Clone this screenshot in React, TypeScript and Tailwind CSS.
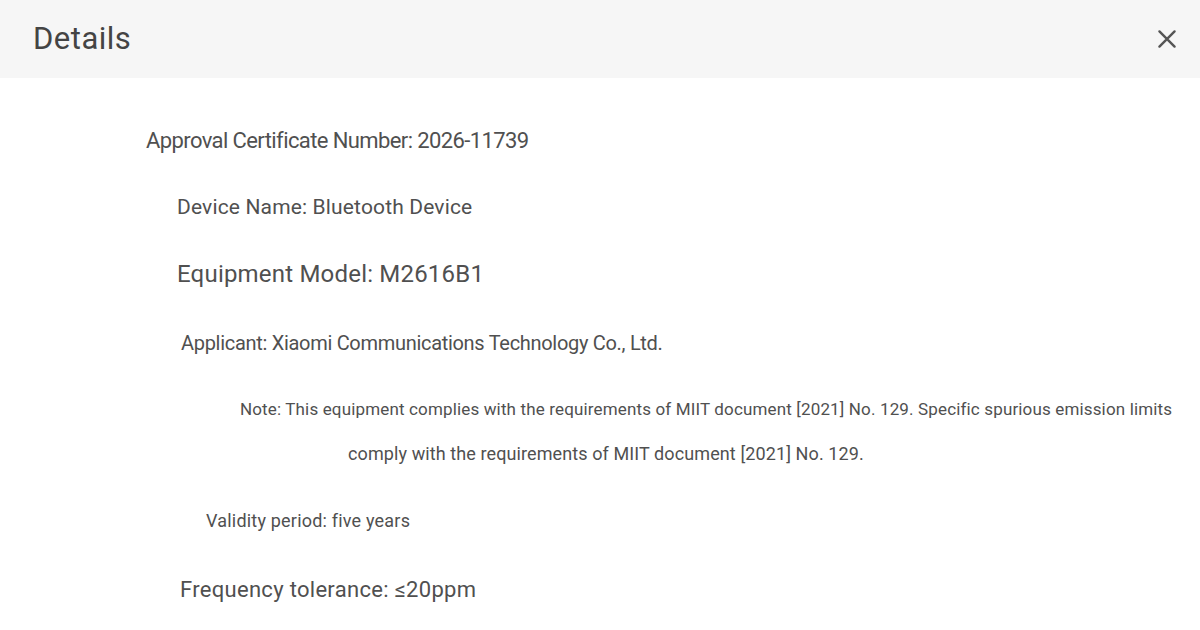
const font = { fontFamily: "Roboto, 'Noto Sans', sans-serif" };

export default function App() {
  return (
    <div className="w-[1200px] h-[630px] bg-white overflow-hidden" style={font}>
      <div className="h-[78px] bg-[#f6f6f6] flex items-center justify-between pl-[33px] pr-[20px]">
        <h1 className="text-[31px] text-[#444] tracking-[0.5px]">Details</h1>
        <svg width="26" height="26" viewBox="0 0 24 24" className="text-[#555]">
          <path d="M5 5l14 14M19 5L5 19" stroke="currentColor" strokeWidth="2.2" strokeLinecap="round" />
        </svg>
      </div>
      <div className="flex flex-col text-[#505050] whitespace-nowrap">
        <p className="mt-[48px] ml-[146px] leading-[30px] text-[22px] tracking-[-0.6px]">
          Approval Certificate Number: 2026-11739
        </p>
        <p className="mt-[36px] ml-[177px] leading-[30px] text-[21px] tracking-[0.15px]">
          Device Name: Bluetooth Device
        </p>
        <p className="mt-[37px] ml-[177px] leading-[30px] text-[24px] tracking-[0.2px]">
          Equipment Model: M2616B1
        </p>
        <p className="mt-[39px] ml-[181px] leading-[30px] text-[20px] tracking-[-0.3px]">
          Applicant: Xiaomi Communications Technology Co., Ltd.
        </p>
        <p className="mt-[36px] ml-[240px] leading-[30px] text-[17px] tracking-[0.15px]">
          Note: This equipment complies with the requirements of MIIT document [2021] No. 129. Specific spurious emission limits
        </p>
        <p className="mt-[15px] ml-[348px] leading-[30px] text-[18px] tracking-[0.1px]">
          comply with the requirements of MIIT document [2021] No. 129.
        </p>
        <p className="mt-[37px] ml-[206px] leading-[30px] text-[18px] tracking-[0.2px]">
          Validity period: five years
        </p>
        <p className="mt-[39px] ml-[180px] leading-[30px] text-[22px] tracking-[0.3px]">
          Frequency tolerance: ≤20ppm
        </p>
      </div>
    </div>
  );
}
